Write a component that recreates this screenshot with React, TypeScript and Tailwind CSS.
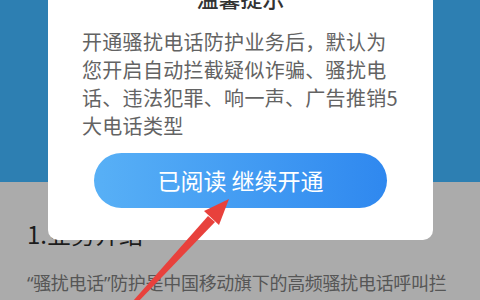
const cjk = "font-['Noto_Sans_CJK_SC','Noto_Sans',sans-serif]"
const latin = "font-['Noto_Sans','Noto_Sans_CJK_SC',sans-serif]"

export default function App() {
  return (
    <div className={`relative h-[300px] w-[480px] overflow-hidden bg-[#ababab] ${cjk}`}>
      <div className="h-[182px] bg-[#2d7fb2]" />
      <div className="px-[27px] pt-[37px]">
        <h2 className="text-[24px] leading-[30px] text-[#1c1c1c]">1.业务介绍</h2>
        <p className="mt-[20px] whitespace-nowrap text-[18px] leading-[26px] tracking-[-0.3px] text-[#565656]">
          <span className={latin}>“</span>骚扰电话<span className={latin}>”</span>防护是中国移动旗下的高频骚扰电话呼叫拦
        </p>
      </div>

      <div className="absolute left-[48px] top-[-28px] flex h-[268px] w-[385px] flex-col items-center rounded-[10px] bg-white pt-[11px]">
        <div className="text-[22px] font-medium leading-[28px] text-[#333]">温馨提示</div>
        <p className="mt-[17px] w-[320px] self-start pl-[34px] text-[20px] leading-[28px] tracking-[0.3px] text-[#636363] box-content">
          开通骚扰电话防护业务后，默认为
          <br />
          您开启自动拦截疑似诈骗、骚扰电
          <br />
          话、违法犯罪、响一声、广告推销5
          <br />
          大电话类型
        </p>
        <button className="mt-[13px] flex h-[55px] w-[293px] items-center justify-center rounded-full bg-gradient-to-r from-[#58b0f6] to-[#2f88ef] text-[23px] text-white">
          已阅读 继续开通
        </button>
      </div>

      <svg className="absolute left-0 top-0" width="480" height="300" viewBox="0 0 480 300">
        <polygon points="133,301 137,303 215,222 208,216" fill="#e8413c" />
        <polygon points="229,199 219,225 204,211" fill="#e8413c" />
      </svg>
    </div>
  )
}
